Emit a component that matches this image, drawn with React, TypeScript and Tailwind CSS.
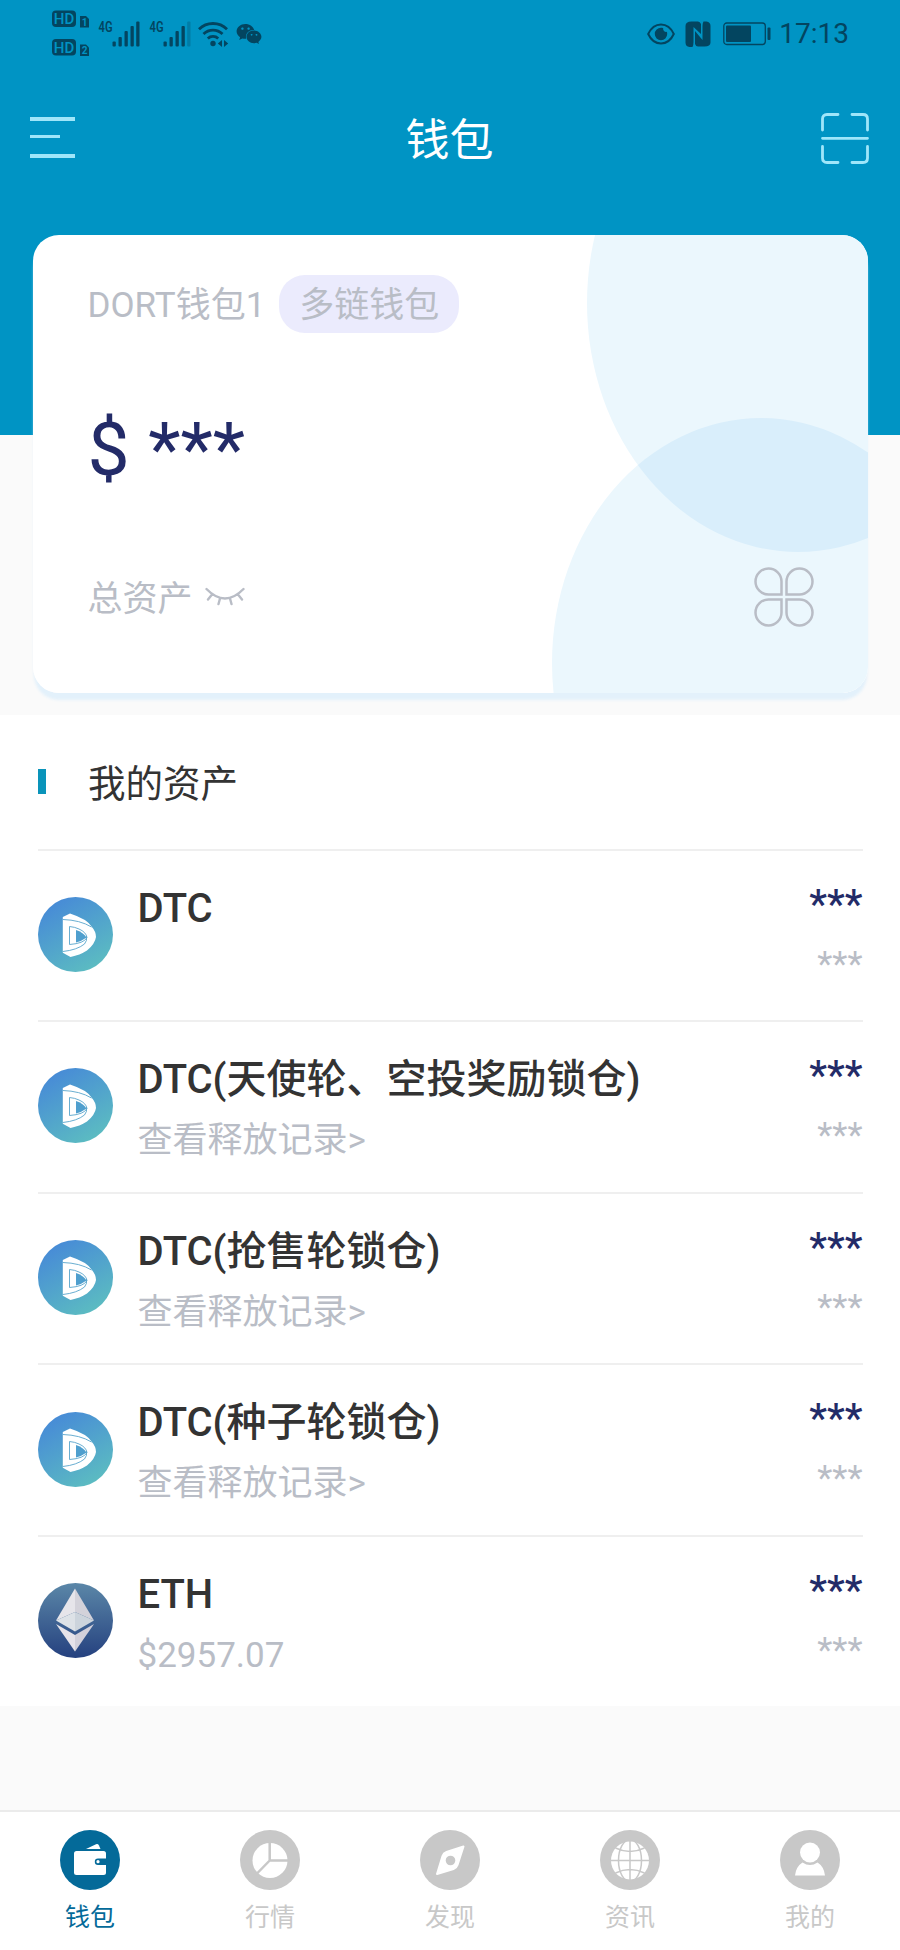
import React from "react";
import { FaWeixin } from "react-icons/fa";

interface Asset {
  name: string;
  sub?: string;
  coin: "dtc" | "eth";
}

interface TabItem {
  label: string;
  icon: React.ReactNode;
  active?: boolean;
}

const ASSETS: Asset[] = [
  { name: "DTC", coin: "dtc" },
  { name: "DTC(天使轮、空投奖励锁仓)", sub: "查看释放记录>", coin: "dtc" },
  { name: "DTC(抢售轮锁仓)", sub: "查看释放记录>", coin: "dtc" },
  { name: "DTC(种子轮锁仓)", sub: "查看释放记录>", coin: "dtc" },
  { name: "ETH", sub: "$2957.07", coin: "eth" },
];

// Status bar icons
const HdIcon = () => (
  <svg width="38" height="48" viewBox="0 0 38 48" fill="currentColor">
    {[0, 28.5].map((y, i) => (
      <g key={y} transform={`translate(0 ${y})`}>
        <rect x="0" y="0.5" width="24" height="16.5" rx="4" />
        <text
          x="12"
          y="14"
          textAnchor="middle"
          fontSize="15"
          fontWeight="500"
          className="fill-[#0094c4]"
        >
          HD
        </text>
        <path d="M28 6h6l3 3v8.500h-9z" />
        <text
          x="32.500"
          y="15.500"
          textAnchor="middle"
          fontSize="10"
          fontWeight="700"
          className="fill-[#0094c4]"
        >
          {i + 1}
        </text>
      </g>
    ))}
  </svg>
);

const SignalIcon = ({ weak = false }: { weak?: boolean }) => (
  <svg
    className="overflow-visible"
    width="42"
    height="30"
    viewBox="0 -4 42 30"
    fill="currentColor"
  >
    <text
      x="0.500"
      y="11"
      fontSize="14.500"
      fontWeight="600"
      textLength="14"
      lengthAdjust="spacingAndGlyphs"
    >
      4G
    </text>
    <rect x="14.500" y="20.500" width="3.300" height="5" rx="1" />
    <rect x="20.500" y="16" width="3.300" height="9.500" rx="1" />
    <rect x="26.500" y="10" width="3.300" height="15.500" rx="1" />
    <rect x="32.500" y="5" width="3.300" height="20.500" rx="1" />
    <rect
      x="38.200"
      y="0.500"
      width="3.300"
      height="25"
      rx="1"
      opacity={weak ? 0.3 : 1}
    />
  </svg>
);

const WifiIcon = () => (
  <svg width="31" height="26" viewBox="0 0 31 26" fill="none">
    <g stroke="currentColor" strokeWidth="2.800">
      <path d="M1 8.200a20 20 0 0 1 28 0" />
      <path d="M5.500 13a13.500 13.500 0 0 1 19 0" />
      <path d="M9.800 17.500a7.500 7.500 0 0 1 10.400 0" />
    </g>
    <circle cx="15" cy="22.500" r="2.700" fill="currentColor" />
    <path d="M24 19v7l-4.200-3.500zM26 19v7l4.200-3.500z" fill="currentColor" />
  </svg>
);

const EyeIcon = () => (
  <svg width="28" height="22" viewBox="0 0 28 22" fill="none">
    <path
      d="M1.200 11C4 5 8.500 1.500 14 1.500S24 5 26.800 11C24 17 19.500 20.500 14 20.500S4 17 1.200 11z"
      stroke="currentColor"
      strokeWidth="2"
    />
    <path
      d="M14 4.800a6.200 6.200 0 1 0 6.200 6.200c0-.8-.1-1.500-.4-2.200a3 3 0 0 1-3.600-3.600c-.7-.3-1.400-.4-2.200-.4z"
      fill="currentColor"
    />
  </svg>
);

const NfcIcon = () => (
  <svg width="26" height="26" viewBox="0 0 26 26" fill="currentColor">
    <path d="M6.500 0.500H13q2 0 3 2.500V13L8.500 6V21q0 3-1 5H4.500Q0.500 25.500 0.500 21.500V5Q0.500 0.500 6.500 0.500z" />
    <path d="M19.500 25.500H13q-2 0-3-2.500V10l7.500 9V5q0-3 1-4.500h3q4 0.500 4 4.500v16.500q0 4-6 4z" />
  </svg>
);

const BatteryIcon = () => (
  <svg width="48" height="24" viewBox="0 0 48 24" fill="none">
    <rect
      x="0.800"
      y="1"
      width="41.500"
      height="21.500"
      rx="3"
      stroke="currentColor"
      strokeWidth="1.300"
    />
    <rect x="3" y="3.500" width="25" height="16.500" rx="1" fill="currentColor" />
    <rect x="44.500" y="5.500" width="3" height="12.500" rx="1" fill="currentColor" />
  </svg>
);

const StatusBar = () => (
  <div className="flex h-[67px] items-center justify-between pl-[52px] pr-[51px] text-[#034560]">
    <div className="flex items-center">
      <HdIcon />
      <div className="mb-[4px] ml-2 flex gap-[9px]">
        <SignalIcon />
        <SignalIcon weak />
      </div>
      <span className="ml-[7px]">
        <WifiIcon />
      </span>
      <FaWeixin className="ml-[7px] size-[26px]" />
    </div>
    <div className="flex items-center">
      <EyeIcon />
      <span className="ml-[10px]">
        <NfcIcon />
      </span>
      <span className="ml-3">
        <BatteryIcon />
      </span>
      <span className="ml-[8px] pt-px text-[28px] leading-none">17:13</span>
    </div>
  </div>
);

const TopBar = () => (
  <div className="flex h-[142px] items-center justify-between pl-[30px] pr-[31px] text-[#9fe6fa]">
    <div className="mb-px flex w-12 flex-col">
      <span className="h-[4px] w-[45px] bg-current" />
      <span className="mt-[14px] h-[3px] w-[30px] bg-current" />
      <span className="mt-4 h-[4px] w-[45px] bg-current" />
    </div>
    <h1 className="pt-[6px] text-[44px] leading-none text-white">钱包</h1>
    <svg
      width="48"
      height="51"
      viewBox="0 0 48 51"
      fill="none"
      stroke="currentColor"
      strokeWidth="2.800"
      strokeLinecap="round"
    >
      <path d="M1.500 17V6q0-4.500 4.500-4.500h11M31 1.500h11q4.500 0 4.500 4.500v11M46.500 33.500V45q0 4.500-4.500 4.500H31M17 49.500H6q-4.500 0-4.500-4.500V33.500M1.500 25.300h45" />
    </svg>
  </div>
);

// Wallet card
const CloverIcon = () => (
  <svg
    width="60"
    height="60"
    viewBox="0 0 60 60"
    fill="none"
    stroke="#b9bdc6"
    strokeWidth="2.500"
  >
    {[0, 90, 180, 270].map((deg) => (
      <path
        key={deg}
        transform={`rotate(${deg} 30 30)`}
        d="M27.500 27.500H14.500a13 13 0 1 1 13-13z"
      />
    ))}
  </svg>
);

const ClosedEyeIcon = () => (
  <svg
    width="40"
    height="20"
    viewBox="0 0 40 20"
    fill="none"
    stroke="#b9bdc6"
    strokeWidth="2.400"
    strokeLinecap="round"
  >
    <path d="M1.500 2Q20 21 38.500 2M7 7.500L3 12.500M15 11.500L13.500 17M25 11.500L26.500 17M33 7.500L37 12.500" />
  </svg>
);

const WalletCard = () => (
  <div className="relative mx-auto h-[458px] w-[835px] overflow-hidden rounded-[26px] bg-white">
    {/* Decorative bubbles */}
    <svg
      className="absolute inset-0"
      width="835"
      height="458"
      viewBox="32 235 835 458"
    >
      <clipPath id="bubble">
        <ellipse cx="797" cy="303" rx="211" ry="249" />
      </clipPath>
      <ellipse cx="797" cy="303" rx="211" ry="249" fill="#ebf7fd" />
      <ellipse cx="760" cy="663" rx="209" ry="245" fill="#ebf7fd" />
      <ellipse
        cx="760"
        cy="663"
        rx="209"
        ry="245"
        fill="#d9eefb"
        clipPath="url(#bubble)"
      />
    </svg>

    <div className="relative flex h-full flex-col pl-[55px] pr-[54px] pt-[40px] text-[35px] text-[#b9bdc6]">
      <div className="flex items-center">
        <span className="pt-[3px] leading-none">DORT钱包1</span>
        <span className="ml-[14px] flex h-[58px] items-center rounded-[26px] bg-[#ebebfd] px-5 pt-[3px] leading-none">
          多链钱包
        </span>
      </div>
      <div className="mt-[72px] text-[75px] leading-[88px] text-[#232b68]">$ ***</div>
      <div className="mt-[74px] flex items-center justify-between">
        <div className="flex items-center gap-[12px] leading-none">
          <span className="pt-[4px]">总资产</span>
          <ClosedEyeIcon />
        </div>
        <CloverIcon />
      </div>
    </div>
  </div>
);

// Coin logos
const DtcLogo = () => (
  <svg className="shrink-0" width="75" height="75" viewBox="0 0 75 75">
    <defs>
      <linearGradient id="dtc" x1="0.200" y1="0" x2="0.800" y2="1">
        <stop offset="0" stopColor="#4688d8" />
        <stop offset="1" stopColor="#5dbfc0" />
      </linearGradient>
    </defs>
    <circle cx="37.500" cy="37.500" r="37.500" fill="url(#dtc)" />
    <path
      d="M24.800 20L32 16.500Q49 22 53.500 29.500Q58 34.500 58 40Q57 47 49 53.500Q42 58 32.500 60L24.800 55.800z"
      fill="#fff"
    />
    <path d="M38 33Q45 35 48.500 40.500Q44 44 38 45.500z" fill="#4f9fce" />
    <path
      d="M24.800 22.500Q42 23 53.500 30M31.500 47.500V29.500Q37 30 41 32Q48 35 49 40.500Q46 46.500 31.500 47.500M24.800 54.500Q39 53 46.500 47Q49.500 43.500 48.500 39"
      fill="none"
      stroke="#58a5cc"
      strokeWidth="0.900"
    />
  </svg>
);

const EthLogo = () => (
  <svg className="shrink-0" width="75" height="75" viewBox="0 0 75 75">
    <defs>
      <linearGradient id="eth" x1="0" y1="0" x2="0" y2="1">
        <stop offset="0" stopColor="#5b87a8" />
        <stop offset="1" stopColor="#25417f" />
      </linearGradient>
    </defs>
    <circle cx="37.500" cy="37.500" r="37.500" fill="url(#eth)" />
    <path d="M37 5.500L18 37.500L37 29z" fill="#e6e5ea" />
    <path d="M37 5.500L56 37.500L37 29z" fill="#d3d2da" />
    <path d="M18 37.500L37 29V48.500z" fill="#dde2e7" />
    <path d="M56 37.500L37 29V48.500z" fill="#ccd4dc" />
    <path d="M18 41L37 52V68.500z" fill="#e6e3e9" />
    <path d="M56 41L37 52V68.500z" fill="#d2d0da" />
  </svg>
);

const AssetRow: React.FC<{ asset: Asset }> = ({ asset }) => (
  <li className="flex h-[171.6px] border-t-2 border-[#efefef]">
    <div className="flex items-center pb-[2px]">
      {asset.coin === "dtc" ? <DtcLogo /> : <EthLogo />}
    </div>
    <div className="ml-[25px] flex-1 pt-[32px]">
      <div className="h-[50px] text-[40px] font-medium leading-[51px] text-[#333]">
        {asset.name}
      </div>
      <div className="mt-[14px] h-[44px] text-[35px] leading-[46px] text-[#b9bdc6]">
        {asset.sub}
      </div>
    </div>
    <div className="pt-[29px] text-right">
      <div className="text-[40px] font-medium leading-[50px] text-[#232b68]">***</div>
      <div className="mt-[13px] text-[35px] leading-[44px] text-[#b9bdc6]">***</div>
    </div>
  </li>
);

// Tab bar, icons are cut out of a 60px disc
const TABS: TabItem[] = [
  {
    label: "钱包",
    active: true,
    icon: (
      <>
        <path d="M26 19L36 14.200Q38 13.500 39 15.500L40.500 19z" fill="#fff" />
        <rect x="14" y="21" width="32" height="24" rx="2.500" fill="#fff" />
        <path d="M47 28.500h-9a3.200 3.200 0 0 0 0 6.400h9z" fill="currentColor" />
        <circle cx="38" cy="31.700" r="1.600" fill="#fff" />
      </>
    ),
  },
  {
    label: "行情",
    icon: (
      <>
        <circle cx="30" cy="30.500" r="17.500" fill="#fff" />
        <path
          d="M29.700 12V30.500H48M29.700 30.500L17 43.500"
          stroke="currentColor"
          strokeWidth="2.500"
          fill="none"
        />
      </>
    ),
  },
  {
    label: "发现",
    icon: (
      <>
        <path
          d="M43.500 16.500L37.500 35Q36.500 38 33.500 39L17 44L22.500 26Q23.500 23 26.500 22z"
          fill="#fff"
          stroke="#fff"
          strokeWidth="2"
          strokeLinejoin="round"
        />
        <circle cx="30.500" cy="30.500" r="4.800" fill="currentColor" />
      </>
    ),
  },
  {
    label: "资讯",
    icon: (
      <>
        <circle cx="30" cy="30.500" r="19" fill="#fff" />
        <g stroke="currentColor" strokeWidth="1.500" fill="none">
          <path d="M30 11v39M11 30.500h38M15.500 18Q30 25 44.500 18M15.500 43Q30 36 44.500 43" />
          <ellipse cx="30" cy="30.500" rx="11.500" ry="21" />
        </g>
      </>
    ),
  },
  {
    label: "我的",
    icon: (
      <>
        <circle cx="30" cy="22.500" r="10" fill="#fff" />
        <path d="M15 45.500Q16 36.500 22.500 32.500Q30 37.500 37.500 32.500Q44 36.500 45 45.500z" fill="#fff" />
      </>
    ),
  },
];

const TabBar = () => (
  <nav className="grid h-[140px] grid-cols-5 border-t-2 border-[#ebebeb] bg-white pt-[18px]">
    {TABS.map(({ label, icon, active }) => (
      <div
        key={label}
        className={`flex flex-col items-center ${active ? "text-[#046a99]" : "text-[#c8c8c8]"}`}
      >
        <svg width="60" height="60" viewBox="0 0 60 60">
          <circle cx="30" cy="30" r="30" fill="currentColor" />
          {icon}
        </svg>
        <span className="mt-[13px] text-[25px] leading-[30px]">{label}</span>
      </div>
    ))}
  </nav>
);

export default function App() {
  return (
    <div className="flex h-[1950px] w-[900px] flex-col bg-[#fafafa] font-['Roboto','Noto_Sans_CJK_SC',sans-serif]">
      <header className="h-[435px] shrink-0 bg-[#0094c4]">
        <StatusBar />
        <TopBar />
      </header>
      <div className="-mt-[200px] h-[480px] shrink-0">
        <div className="mx-auto w-[835px] rounded-[26px] shadow-[0_8px_3px_-1px_#e3f1fb]">
          <WalletCard />
        </div>
      </div>

      <section className="shrink-0 bg-white px-[37.5px]">
        <div className="flex h-[133.5px] items-center">
          <span className="h-[25px] w-2 bg-[#0a94ba]" />
          <h2 className="ml-[42.5px] pt-[5px] text-[37.5px] leading-none text-[#333]">我的资产</h2>
        </div>
        <ul>
          {ASSETS.map((asset) => (
            <AssetRow key={asset.name} asset={asset} />
          ))}
        </ul>
      </section>

      <div className="flex-1" />
      <TabBar />
    </div>
  );
}
